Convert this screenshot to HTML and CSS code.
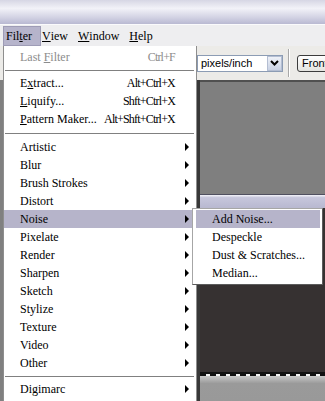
FILE: index.html
```html
<!DOCTYPE html>
<html lang="en">
<head>
  <meta charset="UTF-8">
  <title>Filter Menu</title>
  <link rel="stylesheet" href="styles.css">
</head>
<body>
  <div class="screen">
    <div class="titlebar"></div>

    <div class="menubar">
      <span class="mb-item active">Fil<u>t</u>er</span>
      <span class="mb-item"><u>V</u>iew</span>
      <span class="mb-item"><u>W</u>indow</span>
      <span class="mb-item"><u>H</u>elp</span>
    </div>

    <div class="options">
      <div class="select">
        <span class="select-text">pixels/inch</span>
        <span class="select-btn">
          <svg width="9" height="6" viewBox="0 0 9 6"><path d="M1 1 L4.5 4.5 L8 1" fill="none" stroke="#000" stroke-width="2"/></svg>
        </span>
      </div>
      <div class="vsep"></div>
      <div class="btn">Front Image</div>
    </div>

    <div class="workspace">
      <div class="gutter"></div>
      <div class="docs">
        <div class="doc-gray"></div>
        <div class="doc-title"></div>
        <div class="doc-dark"></div>
        <div class="doc-dash"></div>
        <div class="doc-light"></div>
      </div>
    </div>

    <!-- Filter dropdown -->
    <div class="menu filter-menu">
      <div class="item disabled"><span class="label">Last <u>F</u>ilter</span><span class="key">Ctrl+F</span></div>
      <div class="sep"></div>
      <div class="item"><span class="label">E<u>x</u>tract...</span><span class="key">Alt+Ctrl+X</span></div>
      <div class="item"><span class="label"><u>L</u>iquify...</span><span class="key">Shft+Ctrl+X</span></div>
      <div class="item"><span class="label"><u>P</u>attern Maker...</span><span class="key">Alt+Shft+Ctrl+X</span></div>
      <div class="sep tall"></div>
      <div class="item"><span class="label">Artistic</span><span class="arrow"></span></div>
      <div class="item"><span class="label">Blur</span><span class="arrow"></span></div>
      <div class="item"><span class="label">Brush Strokes</span><span class="arrow"></span></div>
      <div class="item"><span class="label">Distort</span><span class="arrow"></span></div>
      <div class="item active"><span class="label">Noise</span><span class="arrow"></span></div>
      <div class="item"><span class="label">Pixelate</span><span class="arrow"></span></div>
      <div class="item"><span class="label">Render</span><span class="arrow"></span></div>
      <div class="item"><span class="label">Sharpen</span><span class="arrow"></span></div>
      <div class="item"><span class="label">Sketch</span><span class="arrow"></span></div>
      <div class="item"><span class="label">Stylize</span><span class="arrow"></span></div>
      <div class="item"><span class="label">Texture</span><span class="arrow"></span></div>
      <div class="item"><span class="label">Video</span><span class="arrow"></span></div>
      <div class="item"><span class="label">Other</span><span class="arrow"></span></div>
      <div class="sep"></div>
      <div class="item"><span class="label">Digimarc</span><span class="arrow"></span></div>
    </div>

    <!-- Noise submenu -->
    <div class="menu submenu">
      <div class="item active"><span class="label">Add Noise...</span></div>
      <div class="item"><span class="label">Despeckle</span></div>
      <div class="item"><span class="label">Dust &amp; Scratches...</span></div>
      <div class="item"><span class="label">Median...</span></div>
    </div>
  </div>
</body>
</html>
```

FILE: styles.css
```css
body {
  margin: 0;
  font-family: "Liberation Serif", "Times New Roman", serif;
  font-size: 12px;
  color: #000;
}

.screen {
  position: relative;
  width: 325px;
  height: 401px;
  overflow: hidden;
  background-color: #ecebe8;
}

.titlebar {
  height: 24px;
  background: linear-gradient(#d6d6e4, #f2f2f8 35%, #d0d0e2 75%, #b9b9d2);
  border-bottom: 1px solid #fafafc;
}

.menubar {
  display: flex;
  height: 21px;
  background-color: #eeeef0;
  box-sizing: border-box;
  padding: 1px 0 0 3px;
}

.mb-item {
  display: flex;
  align-items: center;
  height: 20px;
  padding: 0 7px 0 3px;
}

.mb-item.active {
  padding-right: 9px;
  margin-right: -2px;
  background-color: #b6b4cb;
  box-shadow: inset 0 0 0 1px #9e9cb6;
}

.options {
  display: flex;
  align-items: center;
  height: 34px;
  padding-left: 197px;
  background-color: #ecebe8;
  font-family: "Liberation Sans", Arial, sans-serif;
  font-size: 11px;
}

.select {
  display: flex;
  align-items: center;
  flex-shrink: 0;
  width: 86px;
  height: 17px;
  box-sizing: border-box;
  border: 1px solid #8c9cb4;
  background-color: #fff;
}

.select-text {
  flex: 1;
  padding-left: 3px;
}

.select-btn {
  display: flex;
  align-items: center;
  justify-content: center;
  width: 15px;
  height: 15px;
  box-sizing: border-box;
  background: linear-gradient(#eef1f8, #c9d2e4);
  border: 1px solid #b4bed2;
}

.vsep {
  flex-shrink: 0;
  width: 1px;
  height: 28px;
  margin-left: 5px;
  background-color: #a8a8a8;
  border-right: 1px solid #fff;
}

.btn {
  flex-shrink: 0;
  height: 17px;
  margin-left: 7px;
  padding: 0 6px 0 4px;
  box-sizing: border-box;
  border: 1px solid #3c3c3c;
  border-radius: 3px;
  background: linear-gradient(#ffffff, #e4e4e0);
  line-height: 15px;
  white-space: nowrap;
}

.workspace {
  display: flex;
  height: 321px;
}

.gutter {
  width: 197px;
  background-color: #808080;
}

.docs {
  flex: 1;
  display: flex;
  flex-direction: column;
  border-left: 3px solid #383838;
}

.doc-gray {
  height: 112px;
  background-color: #7f7f7f;
  border-top: 2px solid #505050;
}

.doc-title {
  height: 13px;
  border-top: 1px solid #505060;
  background: linear-gradient(#f4f4fa, #c6c6dc 20%, #b8b8d0);
}

.doc-dark {
  height: 164px;
  background-color: #363131;
}

.doc-dash {
  height: 4px;
  background-color: #111;
}

.doc-dash::after {
  content: "";
  display: block;
  height: 2px;
  margin-top: 2px;
  background: repeating-linear-gradient(90deg, #111 0, #111 6px, #f0f0f0 6px, #f0f0f0 10px);
}

.doc-light {
  flex: 1;
  background: linear-gradient(#c8c8c8, #9a9a9a 30%, #999);
}

/* menus */
.menu {
  position: absolute;
  box-sizing: border-box;
  background-color: #fff;
  border: 1px solid #8e8e8e;
  padding: 1px 2px 2px 0;
}

.filter-menu {
  left: 3px;
  top: 46px;
  width: 194px;
  height: 380px;
  border-top: none;
  padding-top: 2px;
}

.submenu {
  left: 192px;
  top: 208px;
  width: 131px;
  padding: 1px 2px 2px 3px;
  border-color: #a6a6a6 #5c5c5c #5c5c5c #a6a6a6;
}

.item {
  display: flex;
  align-items: center;
  height: 18px;
  padding: 0 5px 0 16px;
  white-space: nowrap;
}

.item.active {
  background-color: #b6b4ca;
}

.item.disabled {
  color: #8c8c8c;
}

.label {
  flex: 1;
}

.key {
  margin-right: 14px;
  letter-spacing: -0.8px;
}

.arrow {
  width: 0;
  height: 0;
  border-left: 4px solid #000;
  border-top: 4px solid transparent;
  border-bottom: 4px solid transparent;
}

.sep {
  display: flex;
  align-items: center;
  height: 8px;
  padding-left: 1px;
}

.sep::before {
  content: "";
  flex: 1;
  height: 1px;
  background-color: #808080;
}

.sep.tall {
  height: 10px;
}
```
